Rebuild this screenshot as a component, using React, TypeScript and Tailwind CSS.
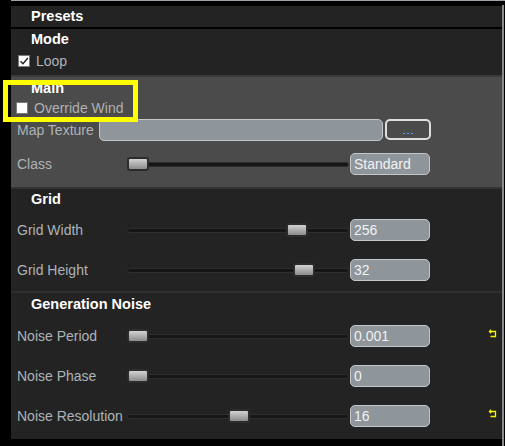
import React from "react";

const FONT = "font-['Liberation_Sans',Arial,Helvetica,sans-serif]";

function Header({ title, h }: { title: string; h: string }) {
  return (
    <div className={`${h} flex items-center pl-[20px] text-[14.5px] font-bold text-white leading-none`}>
      {title}
    </div>
  );
}

function Slider({ pos }: { pos: number }) {
  return (
    <div className="relative w-[222px] h-[14px] shrink-0">
      <div className="absolute left-0 right-0 top-[5px] h-[5px] rounded-full bg-[#161616] border border-[#2e2e2e]" />
      <div
        className="absolute top-0 w-[22px] h-[14px] rounded-[3px] border-2 border-[#2c2c2c] bg-gradient-to-b from-[#d2d2d2] to-[#8c8c8c]"
        style={{ left: pos }}
      />
    </div>
  );
}

function ValueBox({ value }: { value: string }) {
  return (
    <div className="ml-[1px] w-[80px] h-[22px] shrink-0 rounded-[5px] bg-[#8e959b] border border-[#c3c7ca] pl-[3px] flex items-center text-[14px] text-[#f2f2f2] leading-none">
      {value}
    </div>
  );
}

function ResetIcon() {
  return (
    <svg width="9" height="9" viewBox="0 0 9 9" className="ml-[58px] -mt-[5px]" fill="none" stroke="#f4f400" strokeWidth="1.3">
      <path d="M1.5 2.5 H7.5 V7.5 H2.5" />
      <path d="M3.2 0.8 L1.5 2.5 L3.2 4.2" />
    </svg>
  );
}

function SliderRow({ label, pos, value, reset }: { label: string; pos: number; value: string; reset?: boolean }) {
  return (
    <div className="h-[40px] flex items-center pl-[6px]">
      <div className="w-[110px] shrink-0 text-[14px] text-[#adb3b8] leading-none whitespace-nowrap">{label}</div>
      <Slider pos={pos} />
      <ValueBox value={value} />
      {reset && <ResetIcon />}
    </div>
  );
}

function Checkbox({ checked }: { checked?: boolean }) {
  return (
    <div className="w-[12px] h-[12px] bg-white border border-[#7a7a7a] flex items-center justify-center shrink-0">
      {checked && (
        <svg width="10" height="10" viewBox="0 0 10 10" fill="none" stroke="#222" strokeWidth="1.4">
          <path d="M1.5 5.2 L4 7.7 L8.8 2" />
        </svg>
      )}
    </div>
  );
}

export default function App() {
  return (
    <div className={`relative w-[505px] h-[446px] bg-black flex overflow-hidden ${FONT}`}>
      <div className="w-[11px] shrink-0" />
      <div className="w-[491px] shrink-0 flex flex-col">
        <div className="h-[1px] bg-[#9ea4a9]" />
        <div className="h-[5px]" />

        {/* Presets */}
        <div className="bg-[#232323]">
          <Header title="Presets" h="h-[21px]" />
        </div>
        <div className="h-[2px]" />

        {/* Mode */}
        <div className="bg-[#232323] h-[46px]">
          <Header title="Mode" h="h-[20px]" />
          <div className="h-[24px] flex items-center gap-[6px] pl-[7px]">
            <Checkbox checked />
            <span className="text-[14px] text-[#adb3b8] leading-none">Loop</span>
          </div>
        </div>
        <div className="h-[2px] bg-[#3b3b3b]" />

        {/* Main */}
        <div className="bg-[#4b4b4b] h-[110px]">
          <Header title="Main" h="h-[22px]" />
          <div className="h-[17px] flex items-center gap-[6px] pl-[5px]">
            <Checkbox />
            <span className="text-[14px] text-[#aeb0b2] leading-none">Override Wind</span>
          </div>
          <div className="h-[27px] flex items-center pl-[6px]">
            <div className="w-[82px] shrink-0 text-[14px] text-[#adb3b8] leading-none whitespace-nowrap">Map Texture</div>
            <div className="w-[284px] h-[22px] rounded-[5px] bg-[#8e959b] border border-[#c3c7ca]" />
            <div className="ml-[2px] w-[46px] h-[21px] rounded-[5px] border-2 border-[#dedede] bg-[#4b4b4b] flex items-end justify-center gap-[2px] pb-[4px]">
              <span className="w-[2px] h-[1px] bg-[#5d9cff]" />
              <span className="w-[2px] h-[1px] bg-[#5d9cff]" />
              <span className="w-[2px] h-[1px] bg-[#5d9cff]" />
            </div>
          </div>
          <div className="h-[4px]" />
          <div className="h-[34px] flex items-center pl-[6px]">
            <div className="w-[110px] shrink-0 text-[14px] text-[#adb3b8] leading-none">Class</div>
            <Slider pos={0} />
            <ValueBox value="Standard" />
          </div>
        </div>
        <div className="h-[2px] bg-[#333333]" />

        {/* Grid */}
        <div className="bg-[#232323] h-[102px]">
          <Header title="Grid" h="h-[21px]" />
          <SliderRow label="Grid Width" pos={159} value="256" />
          <SliderRow label="Grid Height" pos={166} value="32" />
        </div>
        <div className="h-[2px] bg-[#2e2e2e]" />

        {/* Generation Noise */}
        <div className="bg-[#232323] h-[146px]">
          <Header title="Generation Noise" h="h-[23px]" />
          <SliderRow label="Noise Period" pos={0} value="0.001" reset />
          <SliderRow label="Noise Phase" pos={0} value="0" />
          <SliderRow label="Noise Resolution" pos={101} value="16" reset />
        </div>
      </div>
      <div className="w-[2px] shrink-0 flex flex-col">
        <div className="h-[1px] bg-[#9ea4a9]" />
        <div className="h-[4px]" />
        <div className="flex-1 bg-[#8a8a8a]" />
      </div>
      <div className="w-[1px] shrink-0 flex flex-col">
        <div className="h-[1px] bg-[#9ea4a9]" />
      </div>

      {/* highlight overlay */}
      <div className="absolute left-[3px] top-[80px] w-[135px] h-[42px] border-[5px] border-[#ffff00]" />
    </div>
  );
}
